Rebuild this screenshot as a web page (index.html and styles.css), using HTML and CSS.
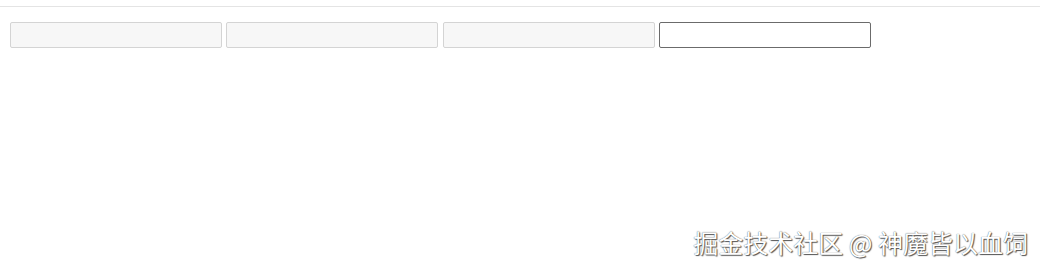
FILE: index.html
```html
<!DOCTYPE html>
<html lang="zh">
<head>
<meta charset="utf-8">
<link rel="stylesheet" href="styles.css">
</head>
<body>
<div class="topline"></div>
<div class="row">
  <input class="field" type="text" disabled>
  <input class="field" type="text" disabled>
  <input class="field" type="text" disabled>
  <input class="field active" type="text">
</div>
<div class="watermark">掘金技术社区 @ 神魔皆以血饲</div>
</body>
</html>
```
FILE: styles.css
```css
html, body {
  margin: 0;
  padding: 0;
  background: #fff;
  width: 1040px;
  height: 269px;
  overflow: hidden;
  position: relative;
  font-family: "Noto Sans CJK SC", "Noto Sans", sans-serif;
}
.topline {
  height: 6px;
  border-bottom: 1px solid #e4e4e4;
}
.row {
  display: flex;
  gap: 4.33px;
  padding: 15px 0 0 10px;
}
.field {
  box-sizing: border-box;
  width: 212px;
  height: 26px;
  margin: 0;
  padding: 0;
  border: 1px solid #d4d4d4;
  border-radius: 2px;
  background: #f7f7f7;
  outline: none;
}
.field.active {
  background: #fff;
  border-color: #6b6b6b;
}
.watermark {
  position: absolute;
  right: 12px;
  bottom: 11px;
  font-size: 25px;
  line-height: 32px;
  color: #fff;
  text-shadow: 0 0 1px #444, 1px 1px 1px #555;
  white-space: nowrap;
}
```
